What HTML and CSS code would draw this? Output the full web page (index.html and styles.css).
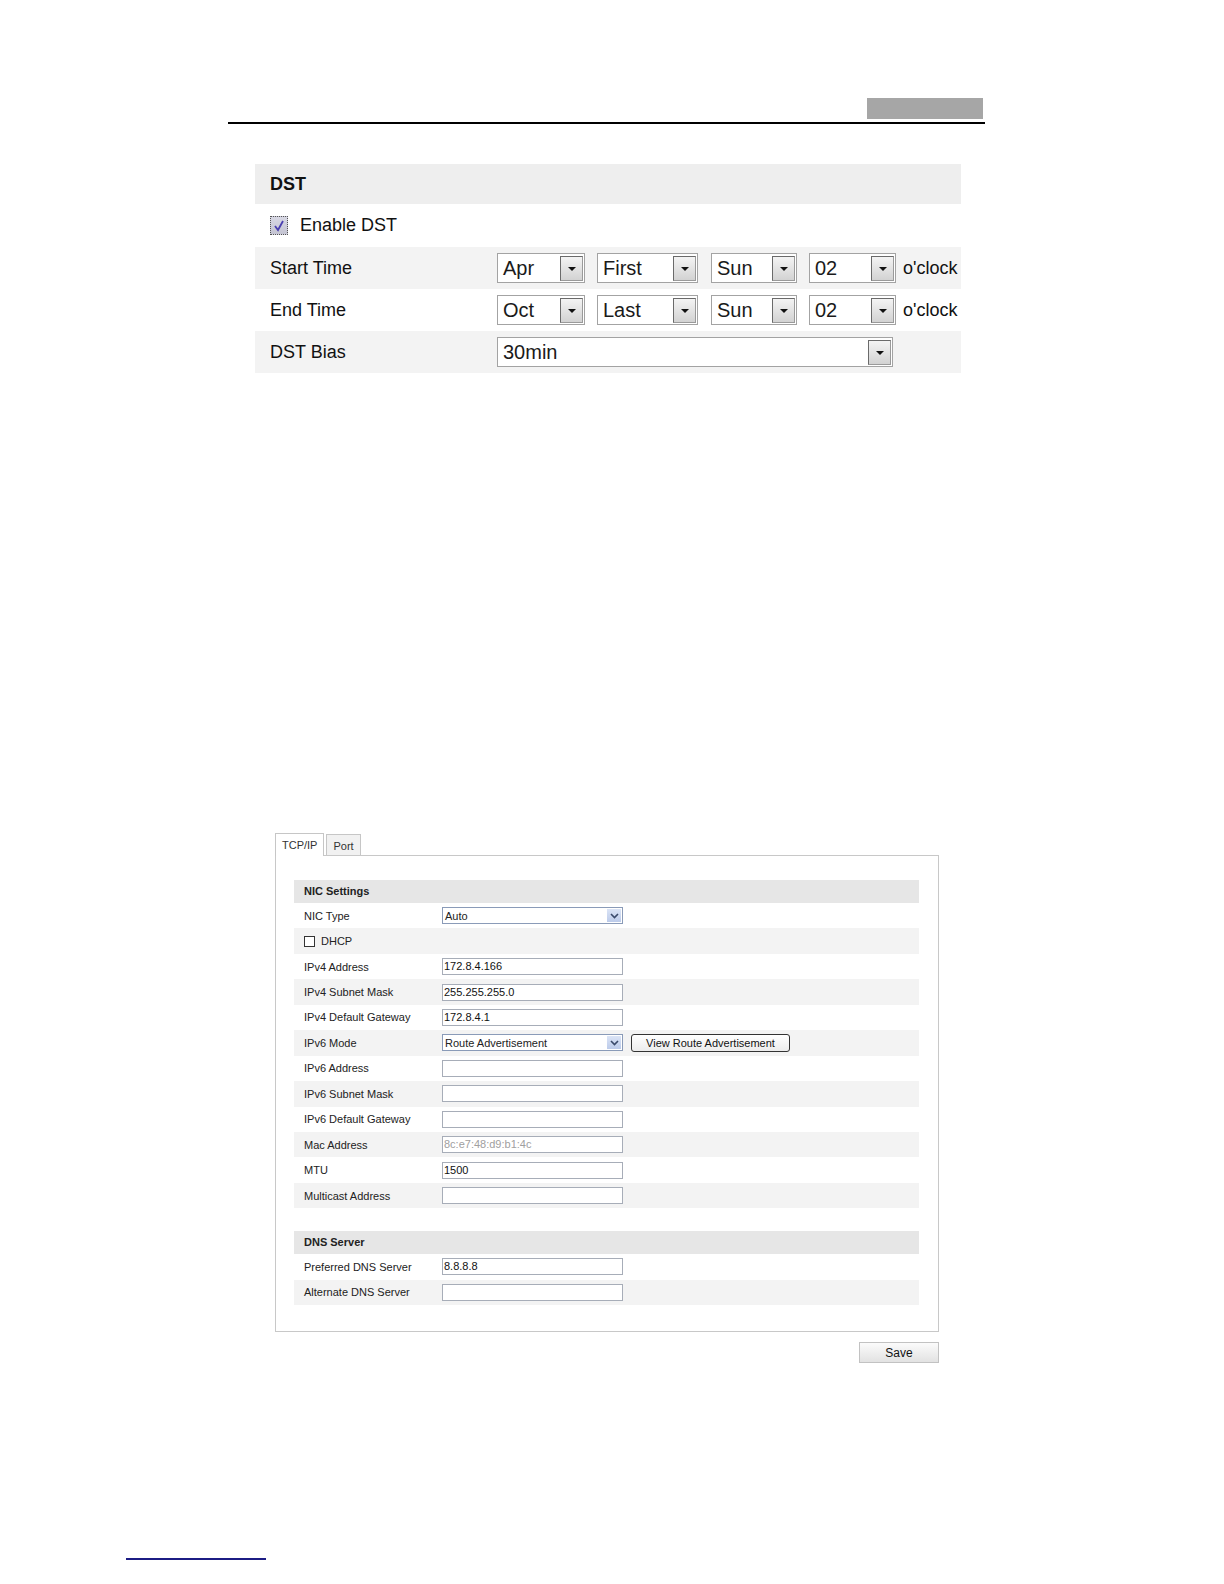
FILE: index.html
```html
<!DOCTYPE html>
<html>
<head>
<meta charset="utf-8">
<link rel="stylesheet" href="styles.css">
</head>
<body>
<div class="page">
  <div class="doc-header">
    <div class="header-box"></div>
  </div>
  <div class="header-rule"></div>

  <div class="dst">
    <div class="dst-title">DST</div>
    <div class="dst-row">
      <span class="big-check"><svg width="14" height="14" viewBox="0 0 14 14"><path d="M3 7 L6 11 L11 2" fill="none" stroke="#4a3fb0" stroke-width="1.8"/></svg></span>
      <span class="enable-label">Enable DST</span>
    </div>
    <div class="dst-row shade">
      <span class="dst-label">Start Time</span>
      <div class="big-select w88"><span class="val">Apr</span><span class="arr"></span></div>
      <div class="big-select w101"><span class="val">First</span><span class="arr"></span></div>
      <div class="big-select w86"><span class="val">Sun</span><span class="arr"></span></div>
      <div class="big-select w87"><span class="val">02</span><span class="arr"></span></div>
      <span class="oclock">o'clock</span>
    </div>
    <div class="dst-row">
      <span class="dst-label">End Time</span>
      <div class="big-select w88"><span class="val">Oct</span><span class="arr"></span></div>
      <div class="big-select w101"><span class="val">Last</span><span class="arr"></span></div>
      <div class="big-select w86"><span class="val">Sun</span><span class="arr"></span></div>
      <div class="big-select w87"><span class="val">02</span><span class="arr"></span></div>
      <span class="oclock">o'clock</span>
    </div>
    <div class="dst-row shade">
      <span class="dst-label">DST Bias</span>
      <div class="big-select w396"><span class="val">30min</span><span class="arr"></span></div>
    </div>
  </div>

  <div class="net">
    <div class="tabs">
      <div class="tab active">TCP/IP</div>
      <div class="tab">Port</div>
    </div>
    <div class="net-panel">
      <div class="sec-title">NIC Settings</div>
      <div class="row"><span class="lbl">NIC Type</span><div class="sel"><span>Auto</span><span class="sel-btn"><svg width="9" height="6" viewBox="0 0 9 6"><path d="M1 1 L4.5 4.5 L8 1" fill="none" stroke="#3a4a6a" stroke-width="1.6"/></svg></span></div></div>
      <div class="row shade"><span class="chk-wrap"><span class="small-check"></span>DHCP</span></div>
      <div class="row"><span class="lbl">IPv4 Address</span><div class="inp">172.8.4.166</div></div>
      <div class="row shade"><span class="lbl">IPv4 Subnet Mask</span><div class="inp">255.255.255.0</div></div>
      <div class="row"><span class="lbl">IPv4 Default Gateway</span><div class="inp">172.8.4.1</div></div>
      <div class="row shade"><span class="lbl">IPv6 Mode</span><div class="sel"><span>Route Advertisement</span><span class="sel-btn"><svg width="9" height="6" viewBox="0 0 9 6"><path d="M1 1 L4.5 4.5 L8 1" fill="none" stroke="#3a4a6a" stroke-width="1.6"/></svg></span></div><button class="view-btn">View Route Advertisement</button></div>
      <div class="row"><span class="lbl">IPv6 Address</span><div class="inp"></div></div>
      <div class="row shade"><span class="lbl">IPv6 Subnet Mask</span><div class="inp"></div></div>
      <div class="row"><span class="lbl">IPv6 Default Gateway</span><div class="inp"></div></div>
      <div class="row shade"><span class="lbl">Mac Address</span><div class="inp disabled">8c:e7:48:d9:b1:4c</div></div>
      <div class="row"><span class="lbl">MTU</span><div class="inp">1500</div></div>
      <div class="row shade"><span class="lbl">Multicast Address</span><div class="inp"></div></div>

      <div class="sec-title dns">DNS Server</div>
      <div class="row"><span class="lbl">Preferred DNS Server</span><div class="inp">8.8.8.8</div></div>
      <div class="row shade"><span class="lbl">Alternate DNS Server</span><div class="inp"></div></div>
    </div>
    <div class="save-wrap"><button class="save-btn">Save</button></div>
  </div>

  <div class="footer-rule"></div>
</div>
</body>
</html>
```

FILE: styles.css
```css
html, body {
  margin: 0;
  padding: 0;
  background: #ffffff;
}
.page {
  font-family: "Liberation Sans", Arial, sans-serif;
  color: #111;
  padding-bottom: 10px;
}
.doc-header {
  margin-left: 228px;
  width: 757px;
  padding-top: 98px;
  display: flex;
  justify-content: flex-end;
}
.header-box {
  width: 116px;
  height: 21px;
  background: #a6a6a6;
  margin-right: 2px;
}
.header-rule {
  margin-left: 228px;
  width: 757px;
  height: 2px;
  background: #000;
  margin-top: 3px;
}

/* DST */
.dst {
  margin-left: 255px;
  width: 706px;
  margin-top: 40px;
}
.dst-title {
  height: 40px;
  background: #eeeeee;
  font-weight: bold;
  font-size: 18px;
  line-height: 40px;
  padding-left: 15px;
}
.dst-row {
  height: 42px;
  display: flex;
  align-items: center;
  padding-left: 15px;
  font-size: 18px;
}
.dst-row:nth-child(2) { height: 43px; }
.dst-row.shade { background: #f3f3f3; }
.big-check {
  width: 16px;
  height: 17px;
  border: 1px dotted #555;
  background: linear-gradient(#d8d8e4, #c4c4d2);
  display: flex;
  align-items: center;
  justify-content: center;
  box-sizing: content-box;
}
.enable-label { margin-left: 12px; }
.dst-label { width: 227px; }
.big-select {
  border: 1px solid #a3a3a3;
  background: #fff;
  display: flex;
  align-items: center;
  justify-content: space-between;
  margin-right: 12px;
  box-sizing: border-box;
  height: 30px;
}
.big-select .val {
  font-size: 20px;
  padding-left: 5px;
  color: #1a1a1a;
}
.big-select .arr {
  width: 23px;
  height: 25px;
  margin-right: 1px;
  border: 1px solid #6a6a6a;
  border-right-color: #9a9a9a;
  border-bottom-color: #9a9a9a;
  background: linear-gradient(#f4f4f4, #d2d2d2);
  position: relative;
  box-sizing: border-box;
}
.big-select .arr::after {
  content: "";
  position: absolute;
  left: 7px;
  top: 10px;
  border-left: 4px solid transparent;
  border-right: 4px solid transparent;
  border-top: 4px solid #111;
}
.w88 { width: 88px; }
.w101 { width: 101px; margin-right: 13px; }
.w86 { width: 86px; }
.w87 { width: 87px; margin-right: 7px; }
.w396 { width: 396px; }
.oclock { font-size: 18px; }

/* Network */
.net {
  margin-left: 275px;
  width: 664px;
  margin-top: 460px;
  font-size: 11px;
}
.tabs {
  display: flex;
  align-items: flex-end;
  height: 22px;
}
.tab {
  border: 1px solid #c6c6c6;
  border-bottom: none;
  height: 21px;
  line-height: 22px;
  padding: 0 6px;
  background: #f1f1f1;
  color: #333;
  margin-right: 2px;
  font-size: 11px;
  box-sizing: border-box;
}
.tab.active {
  background: #fff;
  height: 23px;
  margin-bottom: -1px;
  position: relative;
  z-index: 1;
  line-height: 23px;
}
.net-panel {
  border: 1px solid #c8c8c8;
  padding: 24px 19px 24px 18px;
  height: 477px;
  box-sizing: border-box;
}
.sec-title {
  height: 23px;
  line-height: 23px;
  background: #e6e6e6;
  font-weight: bold;
  padding-left: 10px;
  color: #222;
}
.sec-title.dns { margin-top: 23px; }
.row {
  height: 25.45px;
  display: flex;
  align-items: center;
  padding-left: 10px;
  color: #222;
}
.row.shade { background: #f3f3f3; }
.lbl { width: 138px; }
.inp {
  width: 181px;
  height: 17px;
  border: 1px solid #a7adb8;
  background: #fff;
  box-sizing: border-box;
  line-height: 15px;
  padding-left: 1px;
  color: #111;
}
.inp.disabled { color: #a0a0a0; }
.sel {
  width: 181px;
  height: 17px;
  border: 1px solid #8a9bb8;
  background: #fff;
  box-sizing: border-box;
  display: flex;
  align-items: center;
  justify-content: space-between;
  padding-left: 2px;
}
.sel-btn {
  width: 14px;
  height: 13px;
  margin-right: 1px;
  background: linear-gradient(#dbe4f6, #bccbea);
  display: flex;
  align-items: center;
  justify-content: center;
}
.chk-wrap {
  display: flex;
  align-items: center;
}
.small-check {
  width: 11px;
  height: 11px;
  border: 1px solid #333;
  box-sizing: border-box;
  margin-right: 6px;
  background: #fff;
}
.view-btn {
  margin-left: 8px;
  width: 159px;
  height: 18px;
  border: 1px solid #333;
  border-radius: 3px;
  background: linear-gradient(#ffffff, #ececec);
  font-family: "Liberation Sans", Arial, sans-serif;
  font-size: 11px;
  padding: 0;
  color: #111;
}
.save-wrap {
  display: flex;
  justify-content: flex-end;
  margin-top: 10px;
}
.save-btn {
  width: 80px;
  height: 21px;
  border: 1px solid #c2c2c2;
  background: linear-gradient(#fbfbfb, #e2e2e2);
  font-family: "Liberation Sans", Arial, sans-serif;
  font-size: 12px;
  padding: 0;
  color: #111;
}
.footer-rule {
  margin-left: 126px;
  width: 140px;
  height: 2px;
  background: #1c1c84;
  margin-top: 195px;
}
```
